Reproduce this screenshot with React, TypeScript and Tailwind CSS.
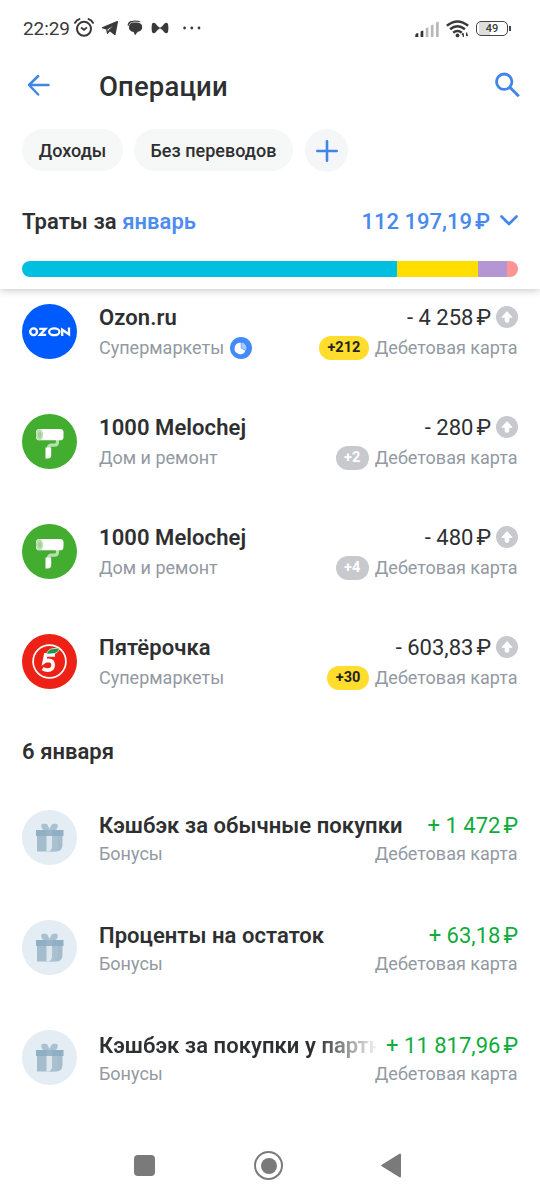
import type { ReactNode } from "react";

function StatusBar() {
  return (
    <div className="flex h-[56px] items-center pr-[29px] pl-[23px] text-[#3a3a3a]">
      <span className="w-[48px] pt-[2px] text-[19px] leading-[24px] tracking-[-0.1px] whitespace-nowrap">22:29</span>
      <svg className="ml-[3px] h-[20px] w-[20px]" viewBox="0 0 20 20" fill="none" stroke="currentColor" strokeWidth="2">
        <circle cx="10" cy="10.8" r="7" />
        <path d="M1 4.8Q2.3 2 5.4 1.1M14.6 1.1Q17.7 2 19 4.8" strokeLinecap="round" />
        <path d="M7 9.6l3 2.2 3-2.4" strokeWidth="1.8" />
      </svg>
      <svg className="ml-[7px] h-[16px] w-[18px]" viewBox="0 0 18 16" fill="currentColor">
        <path d="M1 7.2 16 1q1.2-.3 1 .9l-2.4 12.5q-.3 1-1.200.5L9 11.600l-2.200 2.200q-.7.4-.9-.4L5.200 9.400 1 8.200q-.6-.4 0-1zM6.500 9.500l.5 2 .5-1.500L12 6z" fillRule="evenodd" />
      </svg>
      <svg className="ml-[8px] h-[16px] w-[16px]" viewBox="0 0 16 16" fill="currentColor">
        <path d="M.6 5.400Q.8 2 4 1.100 7 .3 11 .8 13.200 1 13.800 2.200 11 1.400 6.500 1.800 2.600 2.300 1.500 6z" />
        <path d="M5.800 2.600h4.600q4.800.5 4.800 4.600 0 3.900-4.400 4.600L8 15.200 6.600 12Q2.200 11.400 1.900 7.600 1.900 3.400 5.800 2.600z" />
      </svg>
      <svg className="ml-[8px] h-[12px] w-[18px]" viewBox="0 0 18 12" fill="currentColor">
        <path d="M1 2Q2-.2 4.500 1.400L7 4.400q2 1.400 4 0l2.500-3Q16-.2 17 2q.8 4 0 8-1 2.200-3.500.6L11 7.600q-2-1.400-4 0l-2.500 3Q2 12.200 1 10 .2 6 1 2z" />
        <path d="M8.600 1h.8v10h-.8z" fill="#fff" />
      </svg>
      <svg className="ml-[14px] h-[4px] w-[18px]" viewBox="0 0 18 4" fill="currentColor">
        <circle cx="1.600" cy="2" r="1.400" /><circle cx="8.800" cy="2" r="1.400" /><circle cx="16" cy="2" r="1.400" />
      </svg>
      <div className="flex-1" />
      <svg className="mt-px h-[16px] w-[24px]" viewBox="0 0 24 16">
        <path d="M.3 16v-2q.4-1.800 3-2v4zM5.600 16v-5.400q.7-.8 2.700-1.200V16z" fill="#333" />
        <path d="M10.700 16V7.400q1-.8 2.700-1.200V16zM15.800 16V4.600q1-.8 2.700-1.200V16zM21 16V1.600q1-.8 2.700-1.200V16z" fill="#b8b8b8" />
      </svg>
      <svg className="mt-px ml-[7px] h-[18px] w-[23px]" viewBox="0 0 23 18" fill="none" stroke="currentColor" strokeWidth="2.500">
        <path d="M.9 5.800Q6 1.400 11.500 1.400T22.100 5.800" />
        <path d="M4.100 9.300q3.500-3 7.400-3t7.400 3" />
        <path d="M7.200 12.700q2-1.800 4.300-1.800t4.300 1.800" />
        <circle cx="11.500" cy="15.400" r="1.900" fill="currentColor" stroke="none" />
        <path d="M17.300 13.600V17m-1.300-2.200 1.300-1.500M20.600 12.600v3.500m1.300-1.500-1.300 1.600" strokeWidth="1.300" />
      </svg>
      <div className="mt-px ml-[7px] flex h-[15px] w-[32px] items-center justify-center rounded-[5px] border-[1.500px] border-[#444] bg-[linear-gradient(90deg,#fff_2px,#dedede_2px,#dedede_13px,#fff_13px)] text-[11px] leading-none font-medium">49</div>
      <div className="mt-px ml-[1px] h-[5px] w-[2px] bg-[#444]" />
    </div>
  );
}

function Chip({ children, width }: { children: ReactNode; width: string }) {
  return (
    <button className={`${width} flex h-[42px] items-center justify-center rounded-full bg-[#f6f7f7] text-[18px] font-medium tracking-[0.03px] whitespace-nowrap`}>
      {children}
    </button>
  );
}

function OzonLogo() {
  return (
    <svg className="size-[55px]" viewBox="0 0 55 55">
      <circle cx="27.500" cy="27.500" r="27.500" fill="#005bff" />
      <g fill="none" stroke="#fff" strokeWidth="2.300">
        <circle cx="11.600" cy="27.800" r="3.400" />
        <path d="M17.200 24.900h6.300l-5.400 5.900h6" />
        <ellipse cx="32.300" cy="27.800" rx="5.200" ry="3.400" />
        <path d="M40.200 32v-6.300l6.800 4.600V23.500" />
      </g>
    </svg>
  );
}

function RollerLogo() {
  return (
    <svg className="size-[55px]" viewBox="0 0 55 55">
      <circle cx="27.500" cy="27.500" r="27.500" fill="#43ad2f" />
      <path d="M35.500 26v2q0 3.200-3 3.200h-3q-3 0-3 3" fill="none" stroke="#b9dfb0" strokeWidth="3.200" />
      <rect x="14" y="15" width="27.500" height="11.300" rx="3.400" fill="#fff" />
      <ellipse cx="17.500" cy="20.700" rx="3.500" ry="5.600" fill="#b9dfb0" />
      <ellipse cx="17.700" cy="20.700" rx="1.800" ry="3" fill="#9fd394" />
      <path d="M23.500 33.500h5.700v7.600q0 3.500-3.500 3.500h-2.200z" fill="#fff" />
    </svg>
  );
}

function FiveLogo() {
  return (
    <svg className="size-[55px]" viewBox="0 0 55 55">
      <circle cx="27.500" cy="27.500" r="27.500" fill="#ed2115" />
      <circle cx="27.500" cy="27.500" r="16.400" fill="none" stroke="#fff" strokeWidth="1.700" />
      <path d="M33 20.800H23.700L22.400 27.500q1.600-1.200 4-1.200 4.800.2 4.800 4.800-.4 5-5.400 5-2.700 0-5.200-1.500" fill="none" stroke="#fff" strokeWidth="3.700" />
      <path d="M24.500 20.300Q26 15 31 14.600q3.500-.2 6.500-.6-1.200 6-7.500 5.800-2.700 0-5.500.5z" fill="#15984a" stroke="#fff" strokeWidth=".7" />
    </svg>
  );
}

function GiftLogo() {
  return (
    <svg className="size-[55px]" viewBox="0 0 55 55">
      <circle cx="27.500" cy="27.500" r="27.500" fill="#e4ecf4" />
      <path d="M27.500 18.800 25.200 14.600Q24.600 13.700 23.400 13.700h-2.600Q19 13.900 19.200 16q.5 4 4 4.500h4.300z" fill="#a9c1d0" />
      <path d="m27.500 18.800 2.300-4.200q.6-.9 1.800-.9h2.600q1.800.2 1.600 2.300-.5 4-4 4.500h-4.300z" fill="#a9c1d0" />
      <path d="M15 25.500h25.500V35q-.3 6.500-6.500 6.500H15z" fill="#a3bdcd" />
      <path d="M24.500 25.500h5.800V35q0 6.500-4 6.500h-1.800z" fill="#dce7ee" />
      <path d="M30.300 25.500h5.200V36q0 5.500-5.500 5.500h-3.700q4 0 4-6z" fill="#a9c1d1" />
      <path d="M14 20h27.500v6H14z" fill="#8fafc2" />
      <path d="M24.500 20h5.800v6h-5.800z" fill="#97b5c6" />
    </svg>
  );
}

function UpBadge() {
  return (
    <svg className="mb-[2px] ml-[5px] size-[22px]" viewBox="0 0 22 22">
      <circle cx="11" cy="11" r="11" fill="#c7c9cf" />
      <path d="M11 5.600 5.900 11.300h3.300V15q0 1.300 1.800 1.300t1.800-1.300v-3.700h3.300z" fill="#fff" stroke="#fff" strokeLinejoin="round" />
    </svg>
  );
}

function PieBadge() {
  return (
    <svg className="ml-[5.500px] size-[22px]" viewBox="0 0 22 22">
      <circle cx="11" cy="11" r="11" fill="#428bf9" />
      <path d="M10.800 5.800v5.400l4.700 2.600A5.700 5.700 0 1 1 10.800 5.800z" fill="#fff" />
      <path d="M11.300 5.600a5.400 5.400 0 0 1 4.600 7.700l-4.600-2.400z" fill="#a8cafd" />
    </svg>
  );
}

function Amount({ value }: { value: string }) {
  return (
    <span className="flex whitespace-nowrap">
      <span>{value}</span>
      <span className="ml-[3px]">₽</span>
    </span>
  );
}

type Operation = {
  logo: ReactNode;
  title: string;
  category: string;
  amount: string;
  points?: string;
  bright?: boolean;
  pie?: boolean;
  faded?: boolean;
};

const purchases: Operation[] = [
  { logo: <OzonLogo />, title: "Ozon.ru", category: "Супермаркеты", amount: "- 4 258", points: "+212", bright: true, pie: true },
  { logo: <RollerLogo />, title: "1000 Melochej", category: "Дом и ремонт", amount: "- 280", points: "+2" },
  { logo: <RollerLogo />, title: "1000 Melochej", category: "Дом и ремонт", amount: "- 480", points: "+4" },
  { logo: <FiveLogo />, title: "Пятёрочка", category: "Супермаркеты", amount: "- 603,83", points: "+30", bright: true },
];

const bonuses: Operation[] = [
  { logo: <GiftLogo />, title: "Кэшбэк за обычные покупки", category: "Бонусы", amount: "+ 1 472" },
  { logo: <GiftLogo />, title: "Проценты на остаток", category: "Бонусы", amount: "+ 63,18" },
  { logo: <GiftLogo />, title: "Кэшбэк за покупки у партн", category: "Бонусы", amount: "+ 11 817,96", faded: true },
];

function PurchaseRow({ op }: { op: Operation }) {
  return (
    <div className="flex h-[110px] px-[22px]">
      {op.logo}
      <div className="ml-[22px] flex min-w-0 flex-1 flex-col">
        <div className="flex h-[28px] items-center justify-between text-[22px] leading-[28px]">
          <span className="font-semibold tracking-[0.07px] whitespace-nowrap">{op.title}</span>
          <div className="flex items-center">
            <Amount value={op.amount} />
            <UpBadge />
          </div>
        </div>
        <div className="mt-[4px] flex h-[24px] items-center justify-between text-[18px] leading-[24px] text-[#9299a2]">
          <div className="flex items-center whitespace-nowrap">
            {op.category}
            {op.pie && <PieBadge />}
          </div>
          <div className="flex items-center pr-[0.500px] whitespace-nowrap">
            <span className={op.bright ? "mr-[6px] flex h-[24px] items-center rounded-full bg-[#ffdd2d] px-[8.500px] text-[14.500px] font-bold text-[#222]" : "mr-[6px] flex h-[24px] items-center rounded-full bg-[#c7c9cf] px-[8.500px] text-[14.500px] font-bold text-white"}>{op.points}</span>
            Дебетовая карта
          </div>
        </div>
      </div>
    </div>
  );
}

function BonusRow({ op }: { op: Operation }) {
  return (
    <div className="flex h-[110px] px-[22px]">
      {op.logo}
      <div className="ml-[22px] flex min-w-0 flex-1 flex-col pt-[2px]">
        <div className="flex h-[28px] items-center text-[22px] leading-[28px]">
          <span className={op.faded ? "min-w-0 flex-1 overflow-hidden bg-[linear-gradient(90deg,#2e2f31_calc(100%-60px),#ffffff_calc(100%+4px))] bg-clip-text font-semibold tracking-[0.050px] whitespace-nowrap text-transparent" : "min-w-0 flex-1 font-semibold tracking-[0.050px] whitespace-nowrap"}>{op.title}</span>
          <span className="ml-[10px] text-[#0fac3c]"><Amount value={op.amount} /></span>
        </div>
        <div className="mt-[2px] flex h-[24px] items-center justify-between pr-[0.500px] text-[18px] leading-[24px] text-[#9299a2]">
          <span>{op.category}</span>
          <span>Дебетовая карта</span>
        </div>
      </div>
    </div>
  );
}

export default function App() {
  return (
    <div className="flex h-[1200px] w-[540px] flex-col overflow-hidden bg-white font-['Roboto',sans-serif] text-[#2e2f31]">
      <header className="z-10 h-[289px] shrink-0 bg-white shadow-[0_1px_8px_rgba(0,0,0,0.24)]">
        <StatusBar />
        <div className="flex h-[58px] items-center pr-[20px] pl-[26px]">
          <svg className="h-[24px] w-[24px]" viewBox="0 0 24 24" fill="none" stroke="#4285e8" strokeWidth="2.500" strokeLinecap="round" strokeLinejoin="round">
            <path d="M22.500 12H3M12.200 3 3 12l9.200 9.500" />
          </svg>
          <h1 className="ml-[49px] pt-[3px] text-[27.500px] leading-[32px] font-medium tracking-[0.15px]">Операции</h1>
          <div className="flex-1" />
          <svg className="h-[26px] w-[26px]" viewBox="0 0 26 26" fill="none" stroke="#4285e8" strokeWidth="2.800">
            <circle cx="10.200" cy="9.700" r="7.700" />
            <path d="m15.800 15.300 9 9" strokeWidth="3" />
          </svg>
        </div>
        <div className="mt-[15px] flex h-[44px] pl-[22px]">
          <Chip width="w-[101px]">Доходы</Chip>
          <div className="w-[11px]" />
          <Chip width="w-[159px]">Без переводов</Chip>
          <button className="ml-[12px] flex size-[43px] items-center justify-center rounded-full bg-[#f5f6f8]">
            <svg className="size-[22px]" viewBox="0 0 22 22" stroke="#4285e8" strokeWidth="2.600" strokeLinecap="round"><path d="M11 1.300v19.400M1.300 11h19.400" /></svg>
          </button>
        </div>
        <div className="mt-[35px] flex h-[28px] items-center justify-between px-[22px] text-[22px] leading-[28px]">
          <span className="font-semibold tracking-[0.070px]">Траты за <span className="text-[#4d8df0]">январь</span></span>
          <div className="flex items-center text-[#4889ec]">
            <span className="font-medium"><Amount value="112 197,19" /></span>
            <svg className="mb-[2px] ml-[10px] h-[12px] w-[18px]" viewBox="0 0 18 12" fill="none" stroke="#4285e8" strokeWidth="2.600" strokeLinecap="round" strokeLinejoin="round"><path d="m1.500 1.500 7.500 7.500 7.500-7.500" /></svg>
          </div>
        </div>
        <div className="mx-[22px] mt-[25px] flex h-[16px] overflow-hidden rounded-full">
          <div className="w-[375px] bg-[#00bfe0]" />
          <div className="w-[81px] bg-[#ffde00]" />
          <div className="w-[29px] bg-[#b497d2]" />
          <div className="flex-1 bg-[#ff9494]" />
        </div>
      </header>
      <main className="h-[842px] shrink-0 pt-[15px]">
        {purchases.map((op, i) => <PurchaseRow key={i} op={op} />)}
        <h2 className="h-[66px] px-[22px] text-[22px] leading-[16px] font-semibold tracking-[0.050px]">6 января</h2>
        {bonuses.map((op, i) => <BonusRow key={i} op={op} />)}
      </main>
      <nav className="flex flex-1 items-center pl-[134px]">
        <div className="size-[21px] rounded-[4px] bg-[#7a7a7a]" />
        <div className="ml-[99px] flex size-[29px] items-center justify-center rounded-full border-[2.500px] border-[#7a7a7a]"><div className="size-[16px] rounded-full bg-[#7a7a7a]" /></div>
        <svg className="ml-[98px] h-[25px] w-[20px]" viewBox="0 0 20 25"><path d="M1.300 12.500 19 1.500v22z" fill="#7a7a7a" stroke="#7a7a7a" strokeWidth="2" strokeLinejoin="round" /></svg>
      </nav>
    </div>
  );
}
